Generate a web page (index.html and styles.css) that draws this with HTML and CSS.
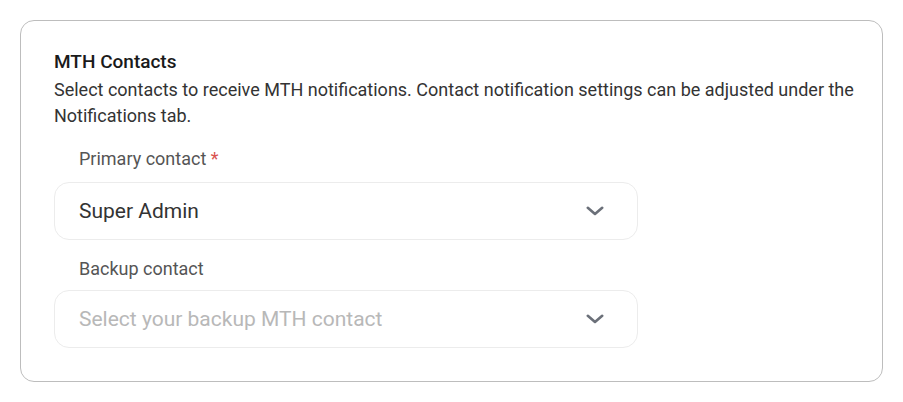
FILE: index.html
```html
<!DOCTYPE html>
<html lang="en">
<head>
<meta charset="utf-8">
<link rel="stylesheet" href="styles.css">
</head>
<body>
<section class="card">
  <h2 class="title">MTH Contacts</h2>
  <p class="desc">Select contacts to receive MTH notifications. Contact notification settings can be adjusted under the Notifications tab.</p>
  <div class="field">
    <label class="label">Primary contact <span class="req">*</span></label>
    <div class="select">
      <span class="value">Super Admin</span>
      <svg class="chev" width="18" height="10" viewBox="0 0 18 10"><path d="M1.8 1.8 L9 8 L16.2 1.8" fill="none" stroke="#6b7079" stroke-width="2.6" stroke-linecap="round" stroke-linejoin="round"/></svg>
    </div>
  </div>
  <div class="field">
    <label class="label">Backup contact</label>
    <div class="select">
      <span class="value placeholder">Select your backup MTH contact</span>
      <svg class="chev" width="18" height="10" viewBox="0 0 18 10"><path d="M1.8 1.8 L9 8 L16.2 1.8" fill="none" stroke="#6b7079" stroke-width="2.6" stroke-linecap="round" stroke-linejoin="round"/></svg>
    </div>
  </div>
</section>
</body>
</html>
```
FILE: styles.css
```css
* { box-sizing: border-box; }
html, body { margin: 0; background: #fff; }
body {
  padding: 20px;
  font-family: Roboto, "Liberation Sans", sans-serif;
  color: #222;
}
.card {
  width: 863px;
  height: 362px;
  border: 1.5px solid #bdbdbd;
  border-radius: 14px;
  padding: 30px 20px 0 33px;
}
.title {
  margin: 0;
  font-size: 19px;
  font-weight: 500;
  line-height: 22px;
  color: #1a1a1a;
}
.desc {
  margin: 4px 0 0;
  font-size: 18px;
  line-height: 26px;
  color: #333;
}
.field { width: 584px; }
.label {
  display: block;
  padding-left: 25px;
  font-size: 18px;
  line-height: 22px;
  color: #555;
  margin-top: 19px;
  margin-bottom: 12px;
}
.field + .field .label { margin-top: 18px; margin-bottom: 10px; }
.req { color: #d9534f; }
.select {
  height: 58px;
  border: 1.5px solid #ececec;
  border-radius: 15px;
  display: flex;
  align-items: center;
  justify-content: space-between;
  padding: 0 33px 0 24px;
}
.value {
  font-size: 21px;
  color: #333;
}
.placeholder { color: #b8b8b8; }
.chev { display: block; }
```
